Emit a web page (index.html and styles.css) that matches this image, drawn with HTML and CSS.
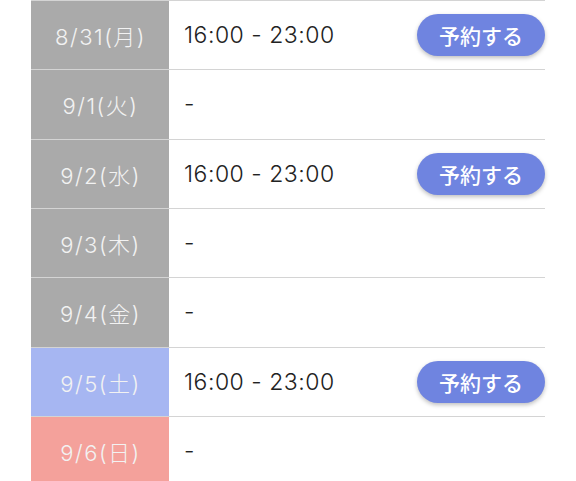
FILE: index.html
```html
<!DOCTYPE html>
<html lang="ja">
<head>
<meta charset="utf-8">
<link rel="stylesheet" href="styles.css">
</head>
<body>
<div class="schedule">
  <div class="row">
    <div class="date weekday">8/31(月)</div>
    <div class="slot"><span class="time">16:00 - 23:00</span><button class="reserve">予約する</button></div>
  </div>
  <div class="row">
    <div class="date weekday">9/1(火)</div>
    <div class="slot"><span class="time">-</span></div>
  </div>
  <div class="row">
    <div class="date weekday">9/2(水)</div>
    <div class="slot"><span class="time">16:00 - 23:00</span><button class="reserve">予約する</button></div>
  </div>
  <div class="row">
    <div class="date weekday">9/3(木)</div>
    <div class="slot"><span class="time">-</span></div>
  </div>
  <div class="row">
    <div class="date weekday">9/4(金)</div>
    <div class="slot"><span class="time">-</span></div>
  </div>
  <div class="row">
    <div class="date saturday">9/5(土)</div>
    <div class="slot"><span class="time">16:00 - 23:00</span><button class="reserve">予約する</button></div>
  </div>
  <div class="row">
    <div class="date sunday">9/6(日)</div>
    <div class="slot"><span class="time">-</span></div>
  </div>
</div>
</body>
</html>
```
FILE: styles.css
```css
html, body {
  margin: 0;
  padding: 0;
  background: #ffffff;
}
body {
  font-family: Inter, "Noto Sans CJK JP", sans-serif;
  overflow: hidden;
}
.schedule {
  margin-left: 31px;
  width: 514px;
}
.row {
  display: grid;
  grid-template-columns: 138px 1fr;
  height: 69.33px;
  box-sizing: border-box;
  border-top: 1px solid #d4d4d4;
}
.date {
  display: flex;
  align-items: center;
  justify-content: center;
  color: #f2f2f2;
  font-size: 22px;
  font-weight: 300;
  letter-spacing: 1.5px;
  padding-left: 1px;
}
.weekday { background: #aaaaaa; }
.saturday { background: #a6b6f2; }
.sunday { background: #f4a19b; }
.slot {
  display: flex;
  align-items: center;
  justify-content: space-between;
  padding-left: 15px;
}
.time {
  color: #222222;
  font-size: 23px;
  font-weight: 300;
  letter-spacing: 0.5px;
}
.reserve {
  width: 128px;
  height: 42px;
  border: none;
  border-radius: 21px;
  background: #6f84e0;
  color: #ffffff;
  font-family: "Noto Sans CJK JP", sans-serif;
  font-size: 21px;
  font-weight: 500;
  box-shadow: 0 2px 4px rgba(0, 0, 0, 0.25);
  padding: 0;
}
```
